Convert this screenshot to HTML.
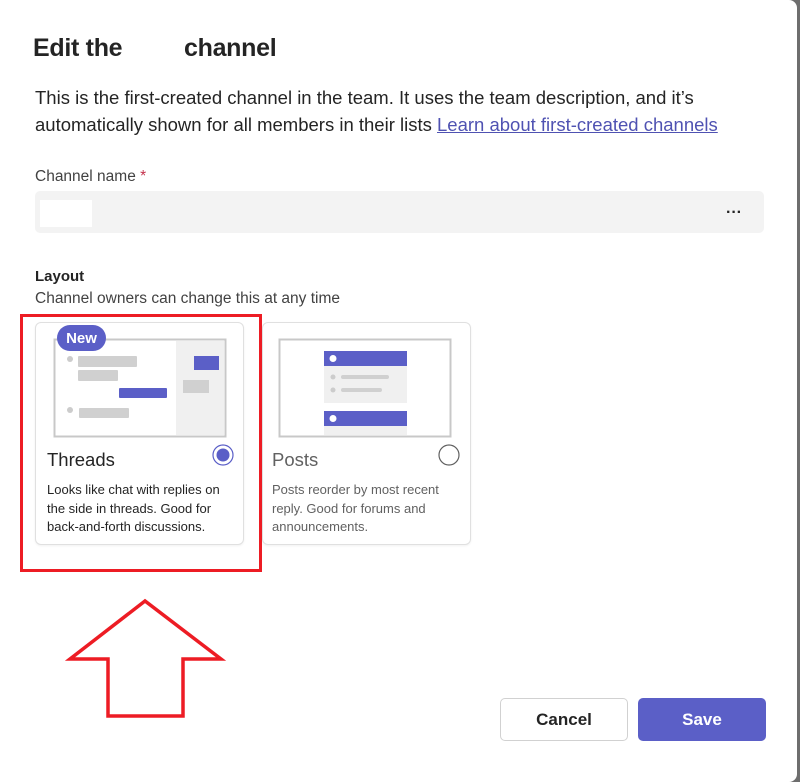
<!DOCTYPE html>
<html><head><style>
body{margin:0;background:#6e6e6e;width:800px;height:782px;overflow:hidden;font-family:"Liberation Sans",sans-serif;}
.dlg{position:absolute;left:0;top:0;width:797px;height:782px;background:#fff;border-radius:0 8px 8px 0;}
.t{position:absolute;color:#242424;white-space:nowrap}
.card{position:absolute;top:322px;width:207px;height:221px;border:1px solid #e0e0e0;border-radius:6px;background:#fff;box-shadow:0 1px 2px rgba(0,0,0,.06)}
.r{position:absolute}
</style></head><body>
<div class="dlg">
<div class="t" style="left:33px;top:34px;font-size:25px;font-weight:bold;letter-spacing:-0.3px">Edit the</div>
<div class="t" style="left:184px;top:34px;font-size:25px;font-weight:bold;letter-spacing:-0.3px">channel</div>
<div class="t" style="left:35px;top:84px;font-size:18.5px;line-height:27px;color:#242424">This is the first-created channel in the team. It uses the team description, and it’s<br>automatically shown for all members in their lists <span style="color:#4f52b2;text-decoration:underline">Learn about first-created channels</span></div>
<div class="t" style="left:35px;top:168px;font-size:15.5px;color:#424242">Channel name <span style="color:#c4314b">*</span></div>
<div class="r" style="left:35px;top:191px;width:729px;height:42px;background:#f3f3f3;border-radius:5px"></div>
<div class="r" style="left:40px;top:200px;width:52px;height:27px;background:#fff"></div>
<div class="t" style="left:726px;top:204px;font-size:16px;font-weight:bold">···</div>
<div class="t" style="left:35px;top:268px;font-size:15px;font-weight:bold">Layout</div>
<div class="t" style="left:35px;top:290px;font-size:15.5px;color:#424242">Channel owners can change this at any time</div>

<div class="card" style="left:35px"></div>
<svg class="r" style="left:0;top:0" width="800" height="782">
<rect x="54.5" y="339.5" width="171" height="97" fill="#fff" stroke="#c8c8c8" stroke-width="2"/>
<rect x="176" y="341" width="48" height="94" fill="#f0f0f0"/>
<circle cx="70" cy="359" r="3" fill="#ccc"/><rect x="78" y="356" width="59" height="11" rx="1" fill="#d0d0d0"/>
<rect x="78" y="370" width="40" height="11" rx="1" fill="#d0d0d0"/>
<rect x="119" y="388" width="48" height="10" rx="1" fill="#5b5fc7"/>
<circle cx="70" cy="410" r="3" fill="#ccc"/><rect x="79" y="408" width="50" height="10" rx="1" fill="#d0d0d0"/>
<rect x="194" y="356" width="25" height="14" fill="#5b5fc7"/>
<rect x="183" y="380" width="26" height="13" fill="#d0d0d0"/>
<rect x="57" y="325" width="49" height="26" rx="13" fill="#5b5fc7"/>
<text x="81.5" y="343" font-size="15" font-weight="bold" fill="#fff" text-anchor="middle" font-family="Liberation Sans">New</text>
<circle cx="223" cy="455" r="10" fill="#fff" stroke="#5b5fc7" stroke-width="1.2"/><circle cx="223" cy="455" r="6.5" fill="#5b5fc7"/>
</svg>
<div class="t" style="left:47px;top:449px;font-size:18.5px">Threads</div>
<div class="t" style="left:47px;top:481px;font-size:13px;line-height:18.5px">Looks like chat with replies on<br>the side in threads. Good for<br>back-and-forth discussions.</div>

<div class="card" style="left:262px"></div>
<svg class="r" style="left:0;top:0" width="800" height="782">
<rect x="279.5" y="339.5" width="171" height="97" fill="#fff" stroke="#c8c8c8" stroke-width="2"/>
<rect x="324" y="366" width="83" height="37" fill="#f0f0f0"/>
<rect x="324" y="351" width="83" height="15" fill="#5b5fc7"/>
<circle cx="333" cy="358.5" r="3.5" fill="#fff"/>
<circle cx="333" cy="377" r="2.5" fill="#ccc"/><rect x="341" y="375" width="48" height="4" rx="2" fill="#d0d0d0"/>
<circle cx="333" cy="390" r="2.5" fill="#ccc"/><rect x="341" y="388" width="41" height="4" rx="2" fill="#d0d0d0"/>
<rect x="324" y="426" width="83" height="9" fill="#f0f0f0"/>
<rect x="324" y="411" width="83" height="15" fill="#5b5fc7"/>
<circle cx="333" cy="418.5" r="3.5" fill="#fff"/>
<circle cx="449" cy="455" r="10" fill="#fff" stroke="#616161" stroke-width="1.2"/>
<rect x="21.5" y="315.5" width="239" height="255" fill="none" stroke="#ed1c24" stroke-width="3"/>
<path d="M145 601 L70 659 L108 659 L108 716 L183 716 L183 659 L221 659 Z" fill="none" stroke="#ed1c24" stroke-width="3.5" stroke-linejoin="miter"/>
</svg>
<div class="t" style="left:272px;top:449px;font-size:18.5px;color:#616161">Posts</div>
<div class="t" style="left:272px;top:481px;font-size:13px;line-height:18.5px;color:#616161">Posts reorder by most recent<br>reply. Good for forums and<br>announcements.</div>

<div class="r" style="left:500px;top:698px;width:126px;height:41px;border:1px solid #d1d1d1;border-radius:5px;background:#fff;text-align:center;line-height:41px;font-size:17px;font-weight:bold;color:#242424">Cancel</div>
<div class="r" style="left:638px;top:698px;width:128px;height:43px;border-radius:5px;background:#5b5fc7;text-align:center;line-height:43px;font-size:17px;font-weight:bold;color:#fff">Save</div>
</div>
</body></html>
